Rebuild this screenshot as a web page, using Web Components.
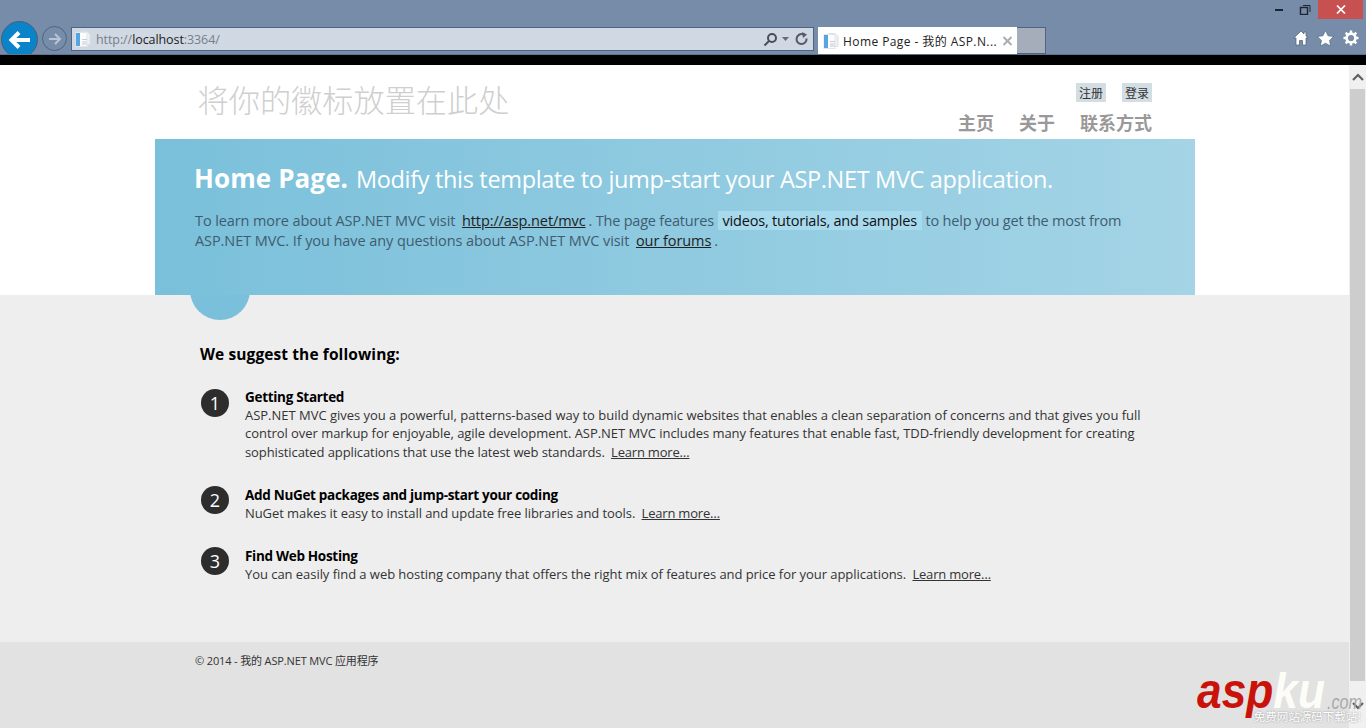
<!DOCTYPE html>
<html lang="zh">
<head>
<meta charset="utf-8">
<title>Home Page</title>
<style>
  html, body { margin: 0; height: 100%; overflow: hidden; }
  body {
    font-family: "Open Sans", "Noto Sans CJK SC", sans-serif;
    display: flex;
    flex-direction: column;
    height: 728px;
    background: #fff;
  }
</style>
</head>
<body>
<ie-chrome></ie-chrome>
<page-frame>
  <site-header></site-header>
  <hero-band></hero-band>
  <suggest-list></suggest-list>
  <site-footer></site-footer>
</page-frame>
<aspku-mark></aspku-mark>

<script>
const SANS = `"Open Sans", "Noto Sans CJK SC", sans-serif`;

const pageIcon = `<svg width="16" height="16" viewBox="0 0 16 16">
  <path d="M6 .5h6l3 3v10H6z" fill="#eef0f3" stroke="#dcdfe4"/>
  <rect x="1" y="1.500" width="11" height="14" fill="#fbfcfd" stroke="#e3e5e8"/>
  <rect x="1" y="2" width="4" height="13" fill="#55a5e2"/>
  <rect x="7" y="8" width="5" height="1" fill="#c9cdd3"/>
  <rect x="7" y="10" width="5" height="4" fill="#dfe2e6"/>
</svg>`;

class IeChrome extends HTMLElement {
  constructor() {
    super();
    this.attachShadow({ mode: "open" });
    this.shadowRoot.innerHTML = `
      <style>
        :host { display: block; height: 55px; background: #768ca9; position: relative; flex: none; }
        .row { position: absolute; left: 0; right: 0; top: 20px; height: 35px; display: flex; align-items: flex-start; overflow: hidden; }
        .back { width: 37px; height: 37px; border-radius: 50%; background: #0a83c9; border: 1px solid #4b5f78; margin: 1px 0 0 1px; box-sizing: border-box; display: flex; align-items: center; justify-content: center; flex: none; }
        .fwd { width: 25px; height: 25px; border-radius: 50%; border: 1px solid #4f6480; box-sizing: border-box; margin: 6px 0 0 4px; display: flex; align-items: center; justify-content: center; flex: none; }
        .addr { width: 743px; height: 24px; box-sizing: border-box; margin: 7px 0 0 4px; background: #d0d8e3; border: 1px solid #4f6480; display: flex; align-items: center; padding: 0 4px 0 3px; font-size: 12.5px; letter-spacing: -.08px; color: #777f88; flex: none; }
        .addr b { font-weight: 400; color: #1c1c1c; }
        .url { margin-left: 5px; flex: 1; }
        .tools { display: flex; align-items: center; }
        .tools svg:nth-child(2) { margin: 0 5px 0 4px; }
        .tab { width: 199px; height: 27px; box-sizing: border-box; margin: 7px 0 0 4px; background: #fff; display: flex; align-items: center; padding: 0 4px 0 5px; font-size: 12px; letter-spacing: .42px; color: #222; flex: none; white-space: nowrap; }
        .tab span { margin-left: 4px; flex: 1; }
        .stub { width: 29px; height: 27px; box-sizing: border-box; margin-top: 7px; background: #a6adba; border: 1px solid #4f6480; border-left: 0; flex: none; }
        .line { position: absolute; left: 0; right: 0; bottom: 0; height: 1px; background: #5f7491; }
        .caption { position: absolute; right: 3px; top: 0; display: flex; height: 19px; }
        .caption > div { display: flex; align-items: center; justify-content: center; }
        .min, .max { width: 26px; }
        .close { width: 45px; background: #c75050; }
        .right { position: absolute; right: 7px; top: 30px; display: flex; align-items: center; }
        .right svg + svg { margin-left: 8px; }
        .right svg:last-child { margin-left: 9px; }
      </style>
      <div class="caption">
        <div class="min"><svg width="10" height="4"><rect x="1" y="1" width="8" height="2" fill="#1c2430"/></svg></div>
        <div class="max"><svg width="12" height="11" viewBox="0 0 12 11" fill="none" stroke="#1c2430"><rect x="1.500" y="3.500" width="7" height="7" stroke-width="1.400"/><path d="M4 1.500h7v6.500"/></svg></div>
        <div class="close"><svg width="10" height="9" viewBox="0 0 10 9"><path d="M1 .5l8 8M9 .5l-8 8" stroke="#fff" stroke-width="1.700" fill="none"/></svg></div>
      </div>
      <div class="row">
        <div class="back"><svg width="24" height="20" viewBox="0 0 24 20"><path d="M11 2.500 3.500 10l7.500 7.500M4 10h18" stroke="#fff" stroke-width="4" fill="none"/></svg></div>
        <div class="fwd"><svg width="15" height="14" viewBox="0 0 15 14"><path d="M8 2l5 5-5 5M13 7H2" stroke="#b9c4d3" stroke-width="2" fill="none"/></svg></div>
        <div class="addr">
          ${pageIcon}
          <span class="url">http://<b>localhost</b>:3364/</span>
          <span class="tools">
            <svg width="15" height="15" viewBox="0 0 15 15" fill="none" stroke="#4a4f57" stroke-width="2"><circle cx="9" cy="6" r="4"/><path d="M6 9l-4.500 4.500"/></svg>
            <svg width="8" height="5" viewBox="0 0 8 5"><path d="M0 0h7L3.500 4z" fill="#666c75"/></svg>
            <svg width="14" height="14" viewBox="0 0 14 14" fill="none" stroke="#555a62" stroke-width="2"><path d="M11.500 6.500A5 5 0 1 1 8 2.300"/><path d="M7 0l5 2.500-4 3.500z" fill="#555a62" stroke="none"/></svg>
          </span>
        </div>
        <div class="tab">${pageIcon}<span>Home Page - 我的 ASP.N...</span>
          <svg width="11" height="10" viewBox="0 0 11 10"><path d="M1.500 1l8 8M9.500 1l-8 8" stroke="#a9aeb5" stroke-width="2" fill="none"/></svg>
        </div>
        <div class="stub"></div>
      </div>
      <div class="right">
        <svg width="16" height="16" viewBox="0 0 16 16"><path d="M8 1 .8 8H3v7h3.500v-4.500h3V15H13V8h2.200L13 6V2h-2v2z" fill="#fff" stroke="#4b5f78" stroke-width=".7"/></svg>
        <svg width="17" height="16" viewBox="0 0 17 16"><path d="M8.500.5l2.500 5.300 5.600.7-4.100 3.900 1.100 5.600-5.100-2.800-5.100 2.800 1.100-5.600L.4 6.500 6 5.800z" fill="#fff" stroke="#4b5f78" stroke-width=".6"/></svg>
        <svg width="16" height="16" viewBox="0 0 16 16"><path d="M8 .5v3M8 12.500v3M.5 8h3M12.500 8h3M2.700 2.700l2.100 2.100M11.200 11.200l2.100 2.100M13.300 2.700l-2.100 2.100M4.800 11.200l-2.100 2.100" stroke="#fff" stroke-width="2.400"/><circle cx="8" cy="8" r="4.400" fill="#768ca9" stroke="#fff" stroke-width="2.600"/></svg>
      </div>
      <div class="line"></div>`;
  }
}
customElements.define("ie-chrome", IeChrome);

class PageFrame extends HTMLElement {
  constructor() {
    super();
    this.attachShadow({ mode: "open" });
    this.shadowRoot.innerHTML = `
      <style>
        :host { display: flex; flex-direction: column; height: 673px; flex: none; }
        .black { height: 10px; background: #000; flex: none; }
        .wrap { flex: 1; display: flex; min-height: 0; }
        .content { flex: 1; display: flex; flex-direction: column; min-width: 0; }
        .bar { width: 17px; flex: none; background: #f0f0f0; display: flex; flex-direction: column; }
        .up { height: 24px; display: flex; align-items: center; justify-content: center; }
        .thumb { height: 592px; background: #cdcdcd; margin: 0 1px; }
        .down { flex: 1; display: flex; align-items: center; justify-content: center; padding-top: 3px; }
      </style>
      <div class="black"></div>
      <div class="wrap">
        <div class="content"><slot></slot></div>
        <div class="bar">
          <div class="up"><svg width="12" height="8" viewBox="0 0 12 8"><path d="M1 7l5-5 5 5" fill="none" stroke="#606060" stroke-width="2.200"/></svg></div>
          <div class="thumb"></div>
          <div class="down"><svg width="12" height="8" viewBox="0 0 12 8"><path d="M1 1l5 5 5-5" fill="none" stroke="#606060" stroke-width="2.200"/></svg></div>
        </div>
      </div>`;
  }
}
customElements.define("page-frame", PageFrame);

class SiteHeader extends HTMLElement {
  constructor() {
    super();
    this.attachShadow({ mode: "open" });
    this.shadowRoot.innerHTML = `
      <style>
        :host { display: block; height: 74px; padding: 0 197px 0 197.500px; font-family: ${SANS}; flex: none; }
        .in { display: flex; justify-content: space-between; height: 100%; }
        .logo { font-size: 31.200px; color: #cfcfcf; line-height: 42px; margin-top: 13px; font-family: "Noto Sans CJK SC", sans-serif; font-weight: 300; }
        .side { display: flex; flex-direction: column; align-items: flex-end; margin-top: 18px; }
        .login { display: flex; gap: 16px; }
        .login span { background: #d3dde4; color: #333; font-size: 12px; line-height: 19px; padding: 0 3px; font-family: "Noto Sans CJK SC", sans-serif; }
        nav { display: flex; gap: 25px; margin-top: 8px; font-size: 18px; font-weight: 700; color: #999; line-height: 24px; font-family: "Noto Sans CJK SC", sans-serif; }
      </style>
      <div class="in">
        <div class="logo">将你的徽标放置在此处</div>
        <div class="side">
          <div class="login"><span>注册</span><span>登录</span></div>
          <nav><span>主页</span><span>关于</span><span>联系方式</span></nav>
        </div>
      </div>`;
  }
}
customElements.define("site-header", SiteHeader);

class HeroBand extends HTMLElement {
  constructor() {
    super();
    this.attachShadow({ mode: "open" });
    this.shadowRoot.innerHTML = `
      <style>
        :host { display: block; height: 156px; flex: none; position: relative; z-index: 1; font-family: ${SANS}; }
        .band { margin-left: 155px; width: 1040px; height: 156px; box-sizing: border-box; padding: 21px 40px 0;
          background: linear-gradient(to right, #7ac0da 0%, #a4d4e6 100%); position: relative; }
        .dot { position: absolute; left: 35px; top: 121px; width: 60px; height: 60px; border-radius: 50%; background: #7ac0da; z-index: -1; }
        h1 { margin: 0; font-weight: 400; color: #fff; font-size: 23.500px; line-height: 36px; white-space: nowrap; letter-spacing: -.33px; }
        h1 b { font-size: 26px; font-weight: 700; letter-spacing: .1px; margin: 0 2px 0 -1px; }
        p { margin: 14px 0 0; font-size: 14.500px; line-height: 20px; color: #3f5c70; white-space: nowrap; letter-spacing: -.1px; }
        p span { letter-spacing: -.08px; }
        p .mid { letter-spacing: -.2px; }
        a { color: #222; text-decoration: underline; padding: 0 3px; }
        mark { background: #a8daee; color: #111; padding: 0 5px; letter-spacing: -.2px; }
      </style>
      <div class="band">
        <div class="dot"></div>
        <h1><b>Home Page.</b> Modify this template to jump-start your ASP.NET MVC application.</h1>
        <p>To learn more about ASP.NET MVC visit <a>http://asp.net/mvc</a><span class="mid">. The page features</span> <mark>videos, tutorials, and samples</mark> <span class="mid">to help you get the most from</span><br><span>ASP.NET MVC. If you have any questions about ASP.NET MVC visit <a>our forums</a>.</span></p>
      </div>`;
  }
}
customElements.define("hero-band", HeroBand);

class SuggestStep extends HTMLElement {
  constructor() {
    super();
    this.attachShadow({ mode: "open" });
    this.shadowRoot.innerHTML = `
      <style>
        :host { display: flex; font-family: ${SANS}; }
        .num { width: 28px; height: 28px; border-radius: 50%; background: #2d2d2d; color: #fff; font-size: 18px; line-height: 28px; text-align: center; flex: none; margin: var(--num-top, 0) 16px 0 1px; }
        .title { font-size: 13.500px; font-weight: 700; color: #000; line-height: 18px; letter-spacing: -.3px; }
        .text { font-size: 13px; line-height: 18.400px; color: #333; letter-spacing: -.02px; white-space: nowrap; }
      </style>
      <div class="num">${this.getAttribute("n")}</div>
      <div>
        <div class="title">${this.getAttribute("title")}</div>
        <div class="text"><slot></slot></div>
      </div>`;
  }
}
customElements.define("suggest-step", SuggestStep);

class SuggestList extends HTMLElement {
  constructor() {
    super();
    this.attachShadow({ mode: "open" });
    this.shadowRoot.innerHTML = `
      <style>
        :host { display: block; flex: 1; background: #eee; padding: 48px 0 0 200px; font-family: ${SANS}; }
        h3 { margin: 0 0 23px; font-size: 15.500px; line-height: 22px; font-weight: 700; color: #000; letter-spacing: .1px; }
        .list { display: flex; flex-direction: column; }
        suggest-step + suggest-step { margin-top: 24.800px; }
        a { color: #333; text-decoration: underline; margin-left: 3px; letter-spacing: -.2px; }
      </style>
      <h3>We suggest the following:</h3>
      <div class="list">
        <suggest-step n="1" title="Getting Started" style="--num-top:1px">ASP.NET MVC gives you a powerful, patterns-based way to build dynamic websites that enables a clean separation of concerns and that gives you full<br><span style="letter-spacing:-.045px">control over markup for enjoyable, agile development. ASP.NET MVC includes many features that enable fast, TDD-friendly development for creating</span><br><span style="letter-spacing:-.1px">sophisticated applications that use the latest web standards. <a>Learn more…</a></span></suggest-step>
        <suggest-step n="2" title="Add NuGet packages and jump-start your coding"><span style="letter-spacing:-.075px">NuGet makes it easy to install and update free libraries and tools. <a>Learn more…</a></span></suggest-step>
        <suggest-step n="3" title="Find Web Hosting"><span style="letter-spacing:-.05px">You can easily find a web hosting company that offers the right mix of features and price for your applications. <a>Learn more…</a></span></suggest-step>
      </div>`;
  }
}
customElements.define("suggest-list", SuggestList);

class SiteFooter extends HTMLElement {
  constructor() {
    super();
    this.attachShadow({ mode: "open" });
    this.shadowRoot.innerHTML = `
      <style>
        :host { display: block; height: 86px; flex: none; background: #e2e2e2; padding: 11px 0 0 195px; box-sizing: border-box; font: 11px/16px ${SANS}; color: #333; letter-spacing: -.14px; }
      </style>
      © 2014 - 我的 ASP.NET MVC 应用程序`;
  }
}
customElements.define("site-footer", SiteFooter);

class AspkuMark extends HTMLElement {
  constructor() {
    super();
    this.attachShadow({ mode: "open" });
    this.shadowRoot.innerHTML = `
      <style>
        :host { position: absolute; left: 1195px; top: 668px; width: 171px; height: 60px; font-family: "Liberation Sans", sans-serif; font-style: italic; font-weight: 700; }
        .word { position: absolute; left: 2px; top: -2px; font-size: 50px; line-height: 50px; white-space: nowrap; color: #c9120a; transform: scaleX(.886); transform-origin: left; }
        .word i { color: #fdfdf8; }
        .com { position: absolute; left: 132px; top: 22px; font-size: 21px; line-height: 24px; font-weight: 400; color: #a9a9a9; white-space: nowrap; transform: scaleX(.77); transform-origin: left; }
        .sub { position: absolute; right: 5px; top: 42px; font: 400 11.500px/13px "Noto Sans CJK SC", sans-serif; color: #fff; text-shadow: 0 0 2px #8a8a8a; white-space: nowrap; }
      </style>
      <div class="word">asp<i>ku</i></div>
      <div class="com">.com</div>
      <div class="sub">免费网站源码下载站!</div>`;
  }
}
customElements.define("aspku-mark", AspkuMark);
</script>
</body>
</html>
